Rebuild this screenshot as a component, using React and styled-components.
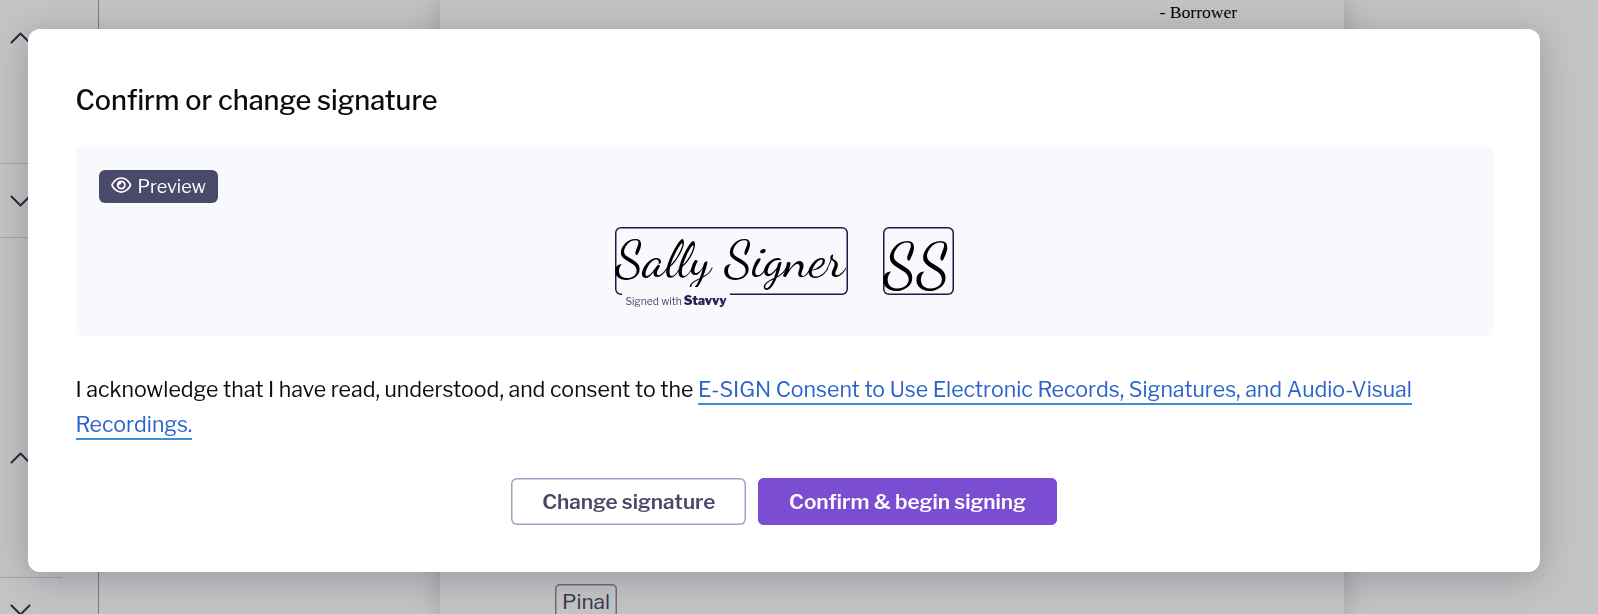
import styled, { createGlobalStyle } from 'styled-components'
import { FaRegEye } from 'react-icons/fa6'

const GlobalStyle = createGlobalStyle`
  *, *::before, *::after {
    box-sizing: border-box;
  }

  body {
    margin: 0;
    overflow: hidden;
    font-family: 'Libre Franklin', 'Open Sans', sans-serif;
    color: #0b0b12;
  }
`

const Page = styled.div`
  display: flex;
  height: 614px;
  background: #ffffff;
  overflow: hidden;
`

const Sidebar = styled.aside`
  flex: none;
  width: 99px;
  border-right: 1px solid #94a0bf;
`

const SidebarSection = styled.div`
  width: 62px;
  height: ${props => props.$height}px;
  padding-top: ${props => props.$offset}px;
  padding-left: 10px;
  border-bottom: 1px solid #d0d6e8;
`

const ChevronIcon = styled.svg`
  display: block;
  width: 21px;
  height: 12px;
  fill: none;
  stroke: #38364f;
  stroke-width: 2;
  stroke-linecap: round;
  stroke-linejoin: round;
`

const DocumentArea = styled.main`
  flex: 1;
  padding-left: 341px;
`

const DocumentSheet = styled.div`
  width: 904px;
  height: 100%;
  display: flex;
  flex-direction: column;
  justify-content: space-between;
  background: #ffffff;
  box-shadow: 0 0 24px 2px rgba(80, 84, 110, 0.26);
`

const SignerRole = styled.div`
  padding-left: 719.5px;
  font-family: 'Liberation Serif', 'Times New Roman', serif;
  font-size: 17.6px;
  line-height: 24px;
  color: #000000;
`

const FieldTag = styled.div`
  width: 62px;
  height: 34px;
  margin-left: 115px;
  margin-bottom: -4px;
  border-radius: 5px;
  box-shadow: inset 0 0 0 1.5px #8f8f96;
  font-size: 20.9px;
  line-height: 35px;
  text-align: center;
  color: #4b4970;
`

const Overlay = styled.div`
  position: fixed;
  inset: 0;
  padding: 28.5px 58px 42px 28px;
  display: flex;
  background: rgba(0, 0, 0, 0.235);
`

const Modal = styled.section`
  flex: 1;
  display: flex;
  flex-direction: column;
  padding: 47px 47.5px;
  background: #ffffff;
  border-radius: 12px;
  box-shadow: 0 6px 36px rgba(30, 32, 60, 0.26);
`

const Title = styled.h1`
  margin: 0 0 22px;
  font-size: 27.1px;
  font-weight: 500;
  line-height: 49px;
`

const PreviewPanel = styled.div`
  height: 189px;
  padding: 23.5px;
  display: flex;
  flex-direction: column;
  background: #f8f9fd;
  border-radius: 6px;
`

const PreviewBadge = styled.div`
  align-self: flex-start;
  width: 119px;
  height: 32.5px;
  padding-left: 12px;
  display: flex;
  align-items: center;
  gap: 6px;
  background: #4a4969;
  border-radius: 6px;
  color: #ffffff;
  font-size: 18.1px;

  svg {
    width: 20.5px;
    height: 18px;
    margin-top: -2px;
  }
`

const SignatureRow = styled.div`
  display: flex;
  justify-content: center;
  gap: 35px;
  margin-top: 24px;
`

const SignatureBox = styled.div`
  position: relative;
  width: ${props => props.$width}px;
  height: 68px;
  padding-left: 1px;
  border-radius: 6px;
  box-shadow: inset 0 0 0 1.5px #1c1849;
  font-family: 'Dancing Script', cursive;
  font-size: ${props => props.$size}px;
  line-height: ${props => props.$leading}px;
  white-space: nowrap;
  color: #000000;
`

// covers the lower edge of the signature box
const SignedWith = styled.div`
  position: absolute;
  left: 7px;
  top: 60px;
  width: 108px;
  height: 25px;
  padding-left: 4px;
  display: flex;
  align-items: baseline;
  gap: 2px;
  background: #f8f9fd;
  font-family: 'Libre Franklin', 'Open Sans', sans-serif;
  font-size: 10.3px;
  line-height: 27px;
  color: #4a4869;
`

const Brand = styled.strong`
  font-size: 12.4px;
  font-weight: 900;
  color: #2b2257;
`

const Consent = styled.p`
  margin: 36px 0 0;
  font-size: 21.33px;
  line-height: 35.5px;
`

const ConsentLink = styled.a`
  padding-bottom: 1px;
  border-bottom: 2px solid #3f8fd2;
  color: #2a63cb;
  text-decoration: none;
`

const Actions = styled.div`
  display: flex;
  justify-content: center;
  gap: 12px;
  margin-top: 35px;
`

const Button = styled.button`
  width: ${props => props.$width}px;
  height: 47.5px;
  padding: 0;
  border: none;
  border-radius: 6px;
  box-shadow: inset 0 0 0 1.5px ${props => (props.$primary ? '#7b4dd3' : '#99a5c0')};
  background: ${props => (props.$primary ? '#7b4dd3' : '#ffffff')};
  color: ${props => (props.$primary ? '#ffffff' : '#4a4869')};
  font-family: inherit;
  font-size: 20.7px;
  font-weight: 600;
`

const Chevron = ({ up }) => (
  <ChevronIcon viewBox="0 0 21 12">
    <path d={up ? 'M1.5 10.5 L10.5 1.5 L19.5 10.5' : 'M1.5 1.5 L10.5 10.5 L19.5 1.5'} />
  </ChevronIcon>
)

const App = () => {
  return (
    <>
      <GlobalStyle />
      <Page>
        <Sidebar>
          <SidebarSection $height={164} $offset={32}>
            <Chevron up />
          </SidebarSection>
          <SidebarSection $height={74} $offset={31}>
            <Chevron />
          </SidebarSection>
          <SidebarSection $height={340} $offset={214}>
            <Chevron up />
          </SidebarSection>
          <SidebarSection $height={74} $offset={26}>
            <Chevron />
          </SidebarSection>
        </Sidebar>
        <DocumentArea>
          <DocumentSheet>
            <SignerRole>- Borrower</SignerRole>
            <FieldTag>Pinal</FieldTag>
          </DocumentSheet>
        </DocumentArea>
      </Page>

      <Overlay>
        <Modal>
          <Title>Confirm or change signature</Title>
          <PreviewPanel>
            <PreviewBadge>
              <FaRegEye />
              Preview
            </PreviewBadge>
            <SignatureRow>
              <SignatureBox $width={233} $size={52} $leading={66}>
                Sally Signer
                <SignedWith>
                  Signed with <Brand>Stavvy</Brand>
                </SignedWith>
              </SignatureBox>
              <SignatureBox $width={71} $size={62} $leading={78}>SS</SignatureBox>
            </SignatureRow>
          </PreviewPanel>
          <Consent>
            I acknowledge that I have read, understood, and consent to the{' '}
            <ConsentLink>
              E-SIGN Consent to Use Electronic Records, Signatures, and Audio-Visual Recordings.
            </ConsentLink>
          </Consent>
          <Actions>
            <Button $width={235}>Change signature</Button>
            <Button $width={298.5} $primary>Confirm &amp; begin signing</Button>
          </Actions>
        </Modal>
      </Overlay>
    </>
  )
}

export default App
